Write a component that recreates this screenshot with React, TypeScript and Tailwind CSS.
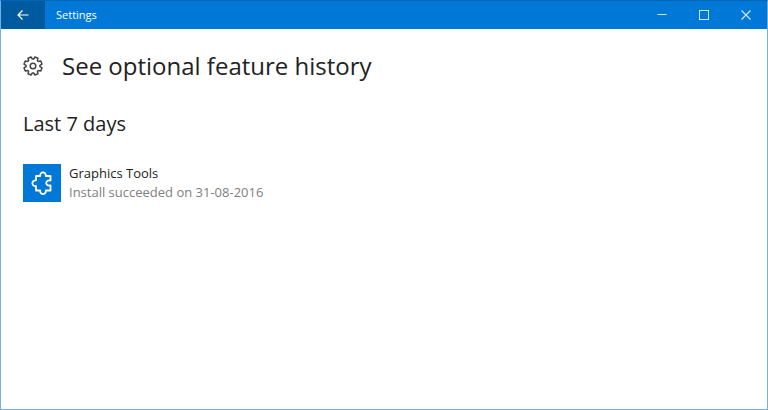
type Feature = {
  name: string;
  status: string;
};

const features: Feature[] = [
  { name: 'Graphics Tools', status: 'Install succeeded on 31-08-2016' },
];

// One gear outline: eight flat teeth, with a valley at the top
function gearPath() {
  const points: string[] = [];
  for (let i = 0; i < 8; i++) {
    const base = i * 45 + 22.5;
    [
      [-17, 7],
      [-10, 9.2],
      [10, 9.2],
      [17, 7],
    ].forEach(([offset, radius]) => {
      const angle = ((base + offset) * Math.PI) / 180;
      points.push(`${(10 + radius * Math.sin(angle)).toFixed(2)} ${(10 - radius * Math.cos(angle)).toFixed(2)}`);
    });
  }
  return `M${points.join('L')}Z`;
}

function GearIcon() {
  return (
    <svg viewBox="0 0 20 20" className="w-5 h-5 shrink-0" fill="none" stroke="#444" strokeWidth="1.5" strokeLinejoin="round" aria-hidden="true">
      <path d={gearPath()} />
      <circle cx="10" cy="10" r="2.8" />
    </svg>
  );
}

function PuzzleIcon() {
  return (
    <svg viewBox="0 0 38 38" className="w-full h-full" fill="none" stroke="#fff" strokeWidth="1.8" strokeLinejoin="round" aria-hidden="true">
      <path d="M13 12H17.2C16.6 7.2 23.4 7.2 22.8 12H27.5V16.6C21.8 15.4 21.8 22.6 27.5 21.4V26.5H22.8C23.4 31.3 16.6 31.3 17.2 26.5H13V22C8.2 22.6 8.2 15.8 13 16.4Z" />
    </svg>
  );
}

function TitleBar() {
  return (
    <header className="flex items-stretch h-7 bg-[#0078d7] text-white">
      <button type="button" aria-label="Back" className="w-[44px] flex items-center justify-center bg-[#005a9e]">
        <svg viewBox="0 0 12 12" className="w-3 h-3" fill="none" stroke="currentColor" strokeWidth="1.2" aria-hidden="true">
          <path d="M11.5 6H1M5.5 1.5L1 6l4.5 4.5" />
        </svg>
      </button>
      <span className="flex-1 flex items-center pl-[11px] text-[11px]">Settings</span>
      <div className="flex text-[#cfe6fa]">
        <button type="button" aria-label="Minimize" className="w-[42px] flex items-center justify-center">
          <svg viewBox="0 0 10 10" className="w-[10px] h-[10px]" fill="none" stroke="currentColor" aria-hidden="true">
            <path d="M0.5 4.5h9" />
          </svg>
        </button>
        <button type="button" aria-label="Maximize" className="w-[42px] flex items-center justify-center">
          <svg viewBox="0 0 10 10" className="w-[10px] h-[10px]" fill="none" stroke="currentColor" aria-hidden="true">
            <rect x="0.5" y="0.5" width="9" height="9" />
          </svg>
        </button>
        <button type="button" aria-label="Close" className="w-[42px] flex items-center justify-center">
          <svg viewBox="0 0 10 10" className="w-[10px] h-[10px]" fill="none" stroke="currentColor" strokeWidth="1.2" aria-hidden="true">
            <path d="M0.5 0.5l9 9M9.5 0.5l-9 9" />
          </svg>
        </button>
      </div>
    </header>
  );
}

export default function App() {
  return (
    <div className="min-h-screen bg-white border border-[#6fb0e8] border-t-[#0067b8] font-['Open_Sans','Noto_Sans',sans-serif]">
      <TitleBar />

      <main className="px-[22px] pt-[21px]">
        <div className="flex items-center gap-[19px]">
          <GearIcon />
          <h1 className="text-2xl text-[#222]">See optional feature history</h1>
        </div>

        <h2 className="mt-7 text-xl leading-7 text-[#222]">Last 7 days</h2>

        <ul className="mt-[26px]">
          {features.map((feature) => (
            <li key={feature.name} className="flex items-center gap-2">
              <div className="w-[38px] h-[38px] shrink-0 bg-[#0078d7]">
                <PuzzleIcon />
              </div>
              <div className="text-[13px] leading-[19px]">
                <p className="text-[#222]">{feature.name}</p>
                <p className="text-[#808080]">{feature.status}</p>
              </div>
            </li>
          ))}
        </ul>
      </main>
    </div>
  );
}
